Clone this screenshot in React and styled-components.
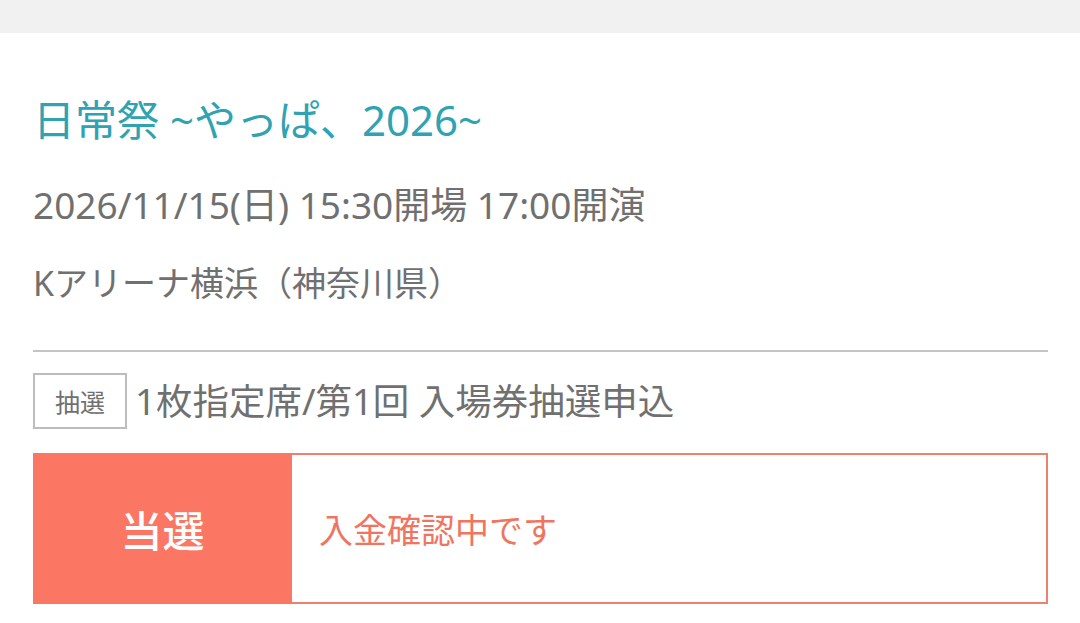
import React from "react";
import styled, { createGlobalStyle } from "styled-components";

const GlobalStyle = createGlobalStyle`
  body {
    margin: 0;
    background: #ffffff;
    font-family: "Noto Sans", "Noto Sans CJK JP", sans-serif;
  }
`;

const TopBar = styled.div`
  height: 33px;
  background: #f1f1f1;
`;

const Card = styled.section`
  padding: 0 32px 0 33px;
`;

const Title = styled.h1`
  margin: 0;
  padding-top: 59px;
  font-size: 42px;
  font-weight: 400;
  line-height: 56px;
  color: #2fa3b1;
`;

const Info = styled.p`
  margin: 0;
  margin-top: ${(p) => p.$gap || 0}px;
  font-size: ${(p) => p.$size || 36}px;
  line-height: 44px;
  color: #707070;
`;

const Divider = styled.hr`
  margin: 45px 0 0;
  border: 0;
  border-top: 2px solid #c4c4c4;
`;

const EntryRow = styled.div`
  display: flex;
  align-items: center;
  gap: 8px;
  height: 56px;
  margin-top: 21px;
`;

const Badge = styled.span`
  box-sizing: border-box;
  width: 94px;
  height: 56px;
  display: flex;
  align-items: center;
  justify-content: center;
  border: 2px solid #bdbdbd;
  font-size: 25px;
  color: #707070;
`;

const EntryName = styled.span`
  font-size: 36.5px;
  line-height: 44px;
  color: #707070;
`;

const Status = styled.div`
  display: flex;
  height: 151px;
  margin-top: 24px;
`;

const Result = styled.div`
  width: 259px;
  display: flex;
  align-items: center;
  justify-content: center;
  background: #fb7763;
  color: #ffffff;
  font-size: 42px;
  font-weight: 500;
`;

const Message = styled.div`
  flex: 1;
  box-sizing: border-box;
  display: flex;
  align-items: center;
  padding-left: 27px;
  border: 2px solid #ec8170;
  border-left: 0;
  font-size: 34px;
  color: #f07561;
`;

export default function App() {
  return (
    <>
      <GlobalStyle />
      <TopBar />
      <Card>
        <Title>日常祭 ~やっぱ、2026~</Title>
        <Info $gap={35} $size={37}>
          2026/11/15(日) 15:30開場 17:00開演
        </Info>
        <Info $gap={34} $size={34}>
          Kアリーナ横浜（神奈川県）
        </Info>
        <Divider />
        <EntryRow>
          <Badge>抽選</Badge>
          <EntryName>1枚指定席/第1回 入場券抽選申込</EntryName>
        </EntryRow>
        <Status>
          <Result>当選</Result>
          <Message>入金確認中です</Message>
        </Status>
      </Card>
    </>
  );
}
